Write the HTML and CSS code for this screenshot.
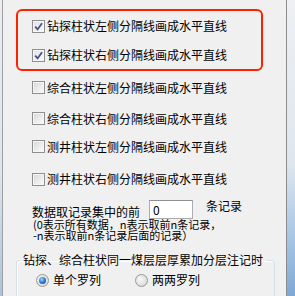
FILE: index.html
```html
<!DOCTYPE html>
<html lang="zh-CN">
<head>
    <meta charset="UTF-8">
    <title>柱状分隔线设置</title>
    <link rel="stylesheet" href="styles.css">
</head>
<body>
    <div class="window">
        <div class="edge edge-left"></div>
        <div class="panel">
            <!-- highlighted options -->
            <div class="highlight">
                <label class="row row-1"><span class="check checked"><svg viewBox="0 0 11 11" width="11" height="11"><path d="M2.2 5.6 L4.6 8.4 L9 2.2" fill="none" stroke="#3d5394" stroke-width="1.8"/></svg></span>钻探柱状左侧分隔线画成水平直线</label>
                <label class="row row-2"><span class="check checked"><svg viewBox="0 0 11 11" width="11" height="11"><path d="M2.2 5.6 L4.6 8.4 L9 2.2" fill="none" stroke="#3d5394" stroke-width="1.8"/></svg></span>钻探柱状右侧分隔线画成水平直线</label>
            </div>

            <div class="options">
                <label class="row row-3"><span class="check"></span>综合柱状左侧分隔线画成水平直线</label>
                <label class="row row-4"><span class="check"></span>综合柱状右侧分隔线画成水平直线</label>
                <label class="row row-5"><span class="check"></span>测井柱状左侧分隔线画成水平直线</label>
                <label class="row row-6"><span class="check"></span>测井柱状右侧分隔线画成水平直线</label>
            </div>

            <!-- record count -->
            <div class="records">
                <span class="records-label">数据取记录集中的前</span>
                <input class="records-input" type="text" value="0">
                <span class="records-unit">条记录</span>
            </div>
            <div class="note">
                (0表示所有数据，n表示取前n条记录，<br>
                -n表示取前n条记录后面的记录）
            </div>

            <fieldset class="group">
                <legend>钻探、综合柱状同一煤层层厚累加分层注记时</legend>
                <div class="radios">
                    <label class="radio-item"><span class="radio selected"></span>单个罗列</label>
                    <label class="radio-item"><span class="radio"></span>两两罗列</label>
                </div>
            </fieldset>
        </div>
        <div class="edge edge-right"></div>
    </div>
</body>
</html>
```

FILE: styles.css
```css
/* dialog panel */
body {
    margin: 0;
    padding: 0;
    font-family: "Noto Sans CJK SC", "Liberation Sans", sans-serif;
    font-size: 12px;
    color: #000;
    background-color: #f0f0f0;
}
.window {
    display: flex;
    width: 295px;
    height: 296px;
    overflow: hidden;
}
.edge {
    flex: none;
}
.edge-left {
    width: 2px;
    background: linear-gradient(#e9edf2, #dbe4ee 60%, #a9c3e0);
}
.edge-right {
    width: 8px;
    background: linear-gradient(#eef0f3, #dfe6ee 55%, #a8c6e6 80%, #7fa8d6);
}
.panel {
    flex: 1;
    background-color: #f0f0f0;
    border-left: 1px solid #a0a0a0;
    border-right: 1px solid #8c8c8c;
    overflow: hidden;
}

.highlight {
    width: 243px;
    margin: 9px 0 0 13px;
    border: 2px solid #ff2200;
    border-radius: 6px;
}
.row {
    display: flex;
    align-items: center;
    line-height: 14px;
    white-space: nowrap;
}
.highlight .row {
    padding-left: 14px;
}
.options .row {
    padding-left: 29px;
}
.row-1 { height: 30px; }
.row-2 { height: 28px; }
.row-3 { height: 33px; }
.row-4 { height: 29px; }
.row-5 { height: 27px; }
.row-6 { height: 38px; }

.check {
    flex: none;
    width: 11px;
    height: 11px;
    margin-right: 2px;
    border: 1px solid #8f8f8f;
    background: linear-gradient(135deg, #d6d6d6, #f2f2f2 70%, #fbfbfb);
    box-shadow: inset 0 0 0 1px #f6f6f6;
    display: flex;
}
.check.checked {
    background: linear-gradient(135deg, #e2e2e2, #fbfbfb);
}

.records {
    display: flex;
    align-items: flex-start;
    height: 21px;
    padding-left: 29px;
    line-height: 14px;
}
.records-label {
    margin-top: 7px;
}
.records-input {
    width: 44px;
    height: 19px;
    margin: 2px 0 0 9px;
    padding: 0 0 0 3px;
    box-sizing: border-box;
    border: 1px solid #abadb3;
    border-top-color: #8c8f94;
    font-family: "Noto Sans CJK SC", sans-serif;
    font-size: 12px;
    background: #fff;
    outline: none;
}
.records-unit {
    margin: 1px 0 0 13px;
}
.note {
    padding-left: 30px;
    font-size: 11px;
    line-height: 11px;
    white-space: nowrap;
}

.group {
    width: 254px;
    min-height: 80px;
    margin: 12px 0 0 13px;
    padding: 0 0 0 3px;
    border: 1px solid #d5dfe5;
    border-radius: 3px;
    box-shadow: inset 1px 1px 0 #fff;
}
.group legend {
    padding: 0 3px;
    line-height: 14px;
    white-space: nowrap;
}
.radios {
    display: flex;
    align-items: center;
    height: 26px;
    padding-left: 16px;
}
.radio-item {
    display: flex;
    align-items: center;
    width: 99px;
    line-height: 14px;
}
.radio {
    flex: none;
    width: 11px;
    height: 11px;
    margin-right: 4px;
    border: 1px solid #9a9a9a;
    border-radius: 50%;
    background: radial-gradient(circle at 40% 40%, #fafafa, #dcdcdc 70%, #c8c8c8);
    position: relative;
}
.radio.selected::after {
    content: "";
    position: absolute;
    left: 2px;
    top: 2px;
    width: 7px;
    height: 7px;
    border-radius: 50%;
    background: radial-gradient(circle at 40% 35%, #9fd7ff, #2c7bd0 50%, #0b3f8c);
}
```
